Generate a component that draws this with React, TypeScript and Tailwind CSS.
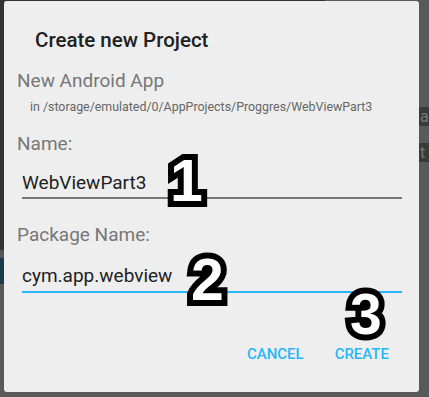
import React from 'react'

const font = { fontFamily: 'Roboto, "Liberation Sans", sans-serif' }

// big outlined marker digits drawn over the dialog
const Marker: React.FC<{ n: string; className: string }> = ({ n, className }) => (
  <span
    className={`absolute font-['Liberation_Sans',Arial,sans-serif] font-bold leading-[40px] text-white [-webkit-text-stroke:12px_black] [paint-order:stroke_fill] ${className}`}
  >
    {n}
  </span>
)

const App: React.FC = () => {
  return (
    <div className="flex w-[429px] h-[397px] bg-[#595959] overflow-hidden" style={font}>
      {/* left edge of the screen behind */}
      <div className="flex flex-col w-[4px] shrink-0">
        <div className="h-[250px] bg-[#333333]" />
        <div className="h-[8px] bg-[#555555]" />
        <div className="h-[26px] bg-[#1b3a4b]" />
      </div>

      <div className="flex flex-col w-[415px] shrink-0">
        <div className="flex h-[1px]">
          <div className="w-[321px] bg-[#333333]" />
        </div>

        {/* dialog */}
        <div className="relative flex flex-col h-[391px] bg-[#eeeeee] rounded-[3px]">
          <div className="pl-[31px] pt-[27px] text-[20.5px] leading-[24px] font-medium text-[#212121]">
            Create new Project
          </div>
          <div className="pl-[13px] mt-[17px] text-[19px] leading-[24px] text-[#777777]">
            New Android App
          </div>
          <div className="pl-[26px] mt-[6px] text-[12.4px] leading-[16px] text-[#666666]">
            in /storage/emulated/0/AppProjects/Proggres/WebViewPart3
          </div>

          <div className="pl-[13px] mt-[17px] text-[19px] leading-[24px] text-[#777777]">Name:</div>
          <div className="ml-[18px] mr-[17px] mt-[15px]">
            <div className="text-[19px] leading-[24px] text-[#222222]">WebViewPart3</div>
            <div className="mt-[2px] h-[2px] bg-[#777777]" />
          </div>

          <div className="pl-[13px] mt-[24px] text-[19px] leading-[24px] text-[#777777]">Package Name:</div>
          <div className="ml-[18px] mr-[17px] mt-[17px]">
            <div className="text-[19px] leading-[24px] text-[#222222]">cym.app.webview</div>
            <div className="mt-[3px] h-[2px] bg-[#29b6f6]" />
          </div>

          <div className="flex justify-end gap-[31px] pr-[30px] mt-[53px] text-[15px] leading-[16px] font-medium text-[#29b6f6]">
            <span>CANCEL</span>
            <span>CREATE</span>
          </div>

          <Marker n="1" className="text-[59px] left-[166px] top-[160px]" />
          <Marker n="2" className="text-[59px] left-[187px] top-[259px]" />
          <Marker n="3" className="text-[57px] left-[346px] top-[293px]" />
        </div>
      </div>

      {/* right edge of the screen behind */}
      <div className="flex flex-col w-[10px] shrink-0 pt-[107px] gap-[17px]">
        <div className="h-[19px] bg-[#3a3a3a] text-[#777777] text-[16px] leading-[19px] pl-[1px]">a</div>
        <div className="h-[19px] bg-[#3a3a3a] text-[#777777] text-[16px] leading-[19px] pl-[1px]">t</div>
      </div>
    </div>
  )
}

export default App
